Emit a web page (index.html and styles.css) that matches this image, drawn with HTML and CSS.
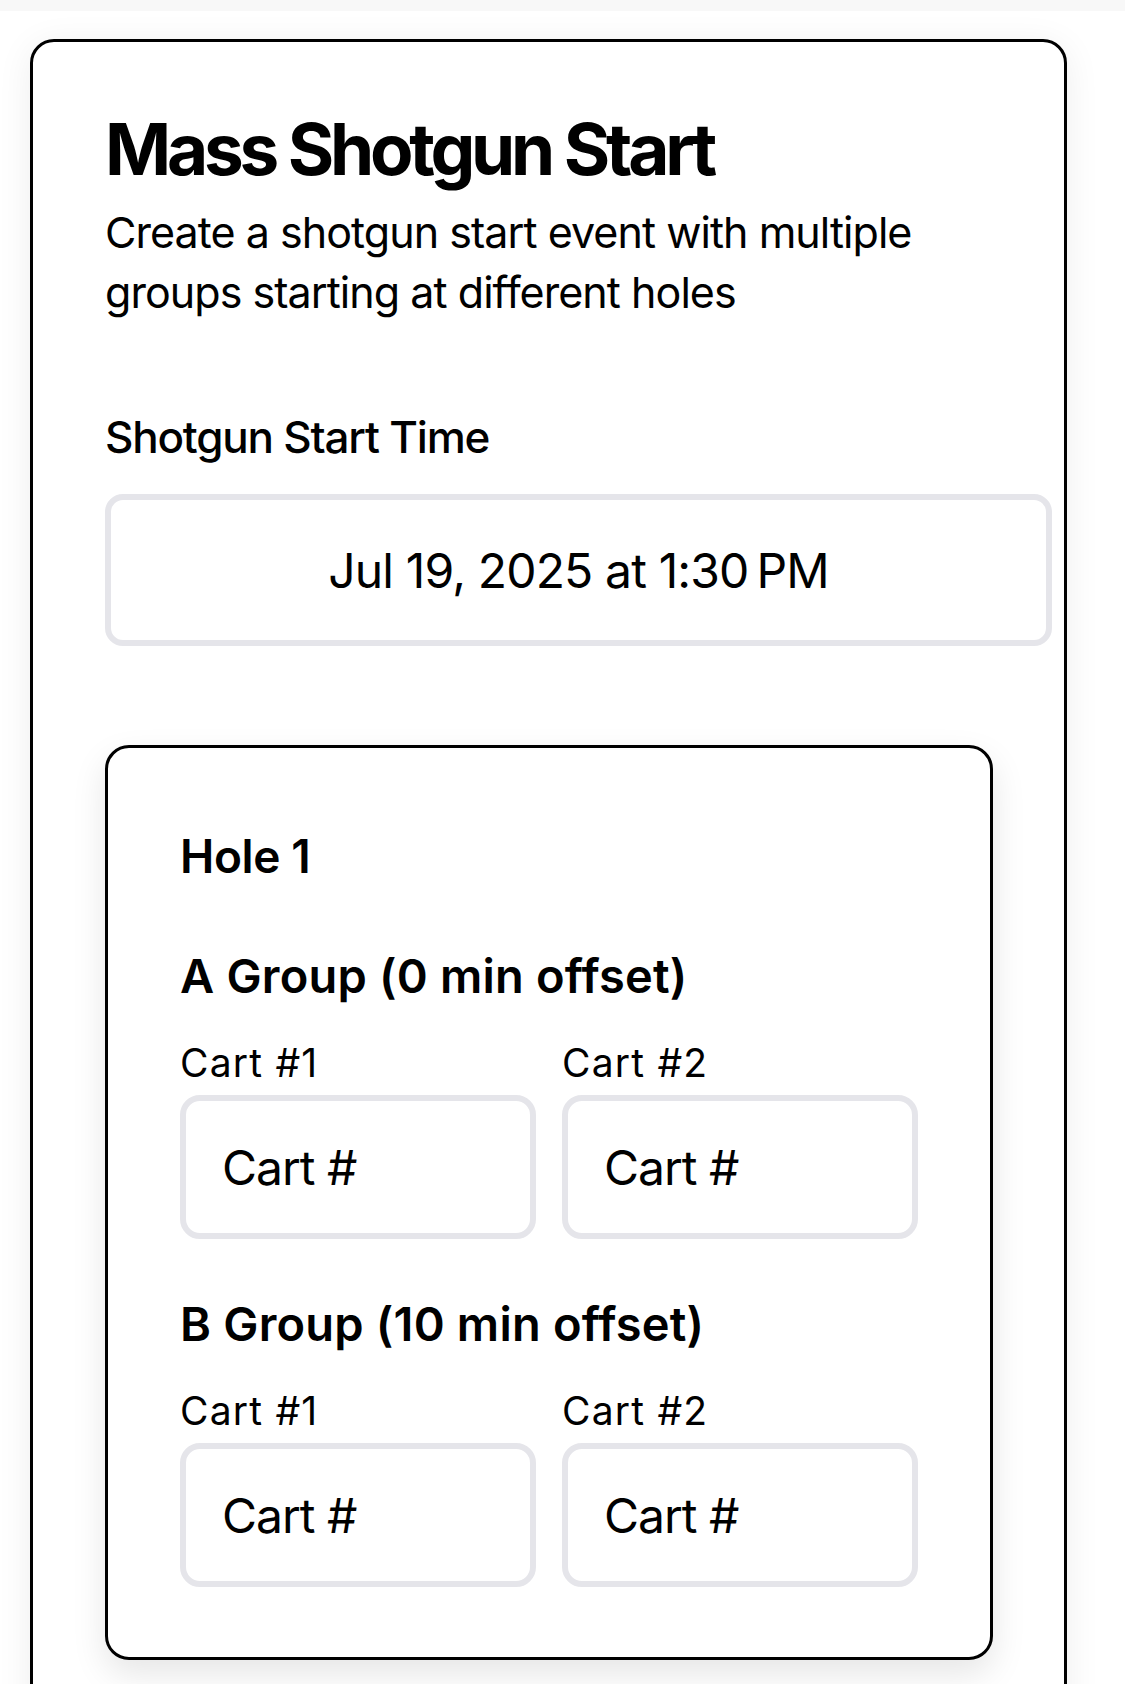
FILE: index.html
```html
<!DOCTYPE html>
<html lang="en">
<head>
<meta charset="utf-8">
<title>Mass Shotgun Start</title>
<link rel="stylesheet" href="styles.css">
</head>
<body>
<div class="topstrip"></div>
<main class="card">
  <h1 class="title">Mass Shotgun Start</h1>
  <p class="subtitle">Create a shotgun start event with multiple groups starting at different holes</p>

  <label class="field-label">Shotgun Start Time</label>
  <div class="time-input">Jul 19, 2025 at 1:30&#8239;PM</div>

  <section class="hole-card">
    <h2 class="hole-title">Hole 1</h2>

    <div class="group">
      <h3 class="group-title">A Group (0 min offset)</h3>
      <div class="cart-grid">
        <div class="cart-field">
          <label class="cart-label">Cart #1</label>
          <div class="cart-input">Cart #</div>
        </div>
        <div class="cart-field">
          <label class="cart-label">Cart #2</label>
          <div class="cart-input">Cart #</div>
        </div>
      </div>
    </div>

    <div class="group">
      <h3 class="group-title">B Group (10 min offset)</h3>
      <div class="cart-grid">
        <div class="cart-field">
          <label class="cart-label">Cart #1</label>
          <div class="cart-input">Cart #</div>
        </div>
        <div class="cart-field">
          <label class="cart-label">Cart #2</label>
          <div class="cart-input">Cart #</div>
        </div>
      </div>
    </div>
  </section>
</main>
</body>
</html>
```

FILE: styles.css
```css
* { box-sizing: border-box; }

html, body {
  margin: 0;
  padding: 0;
  background: #ffffff;
  color: #000000;
  font-family: Inter, "Noto Sans", "Liberation Sans", sans-serif;
  overflow: hidden;
}

.topstrip {
  height: 11px;
  background: #f8f8f8;
}

.card {
  display: block;
  margin: 28px 0 0 30px;
  width: 1037px;
  border: 3px solid #000;
  border-radius: 24px;
  padding: 71px 72px 72px 72px;
  background: #fff;
  box-shadow: 0 6px 36px rgba(0, 0, 0, 0.07);
}

.title {
  margin: 0;
  font-size: 71px;
  line-height: 72px;
  font-weight: 700;
  letter-spacing: -4.2px;
}

.subtitle {
  margin: 17px 0 0 0;
  font-size: 43px;
  line-height: 60px;
  font-weight: 400;
  letter-spacing: -0.95px;
}

.field-label {
  display: block;
  margin-top: 85px;
  font-size: 44px;
  line-height: 60px;
  font-weight: 500;
  letter-spacing: -1.2px;
}

.time-input {
  margin-top: 27px;
  width: 947px;
  height: 152px;
  border: 6px solid #e5e5ea;
  border-radius: 18px;
  display: flex;
  align-items: center;
  justify-content: center;
  font-size: 48px;
  font-weight: 400;
  letter-spacing: -0.85px;
}

.hole-card {
  margin-top: 99px;
  width: 888px;
  border: 3px solid #000;
  border-radius: 24px;
  padding: 72px 72px 70px 72px;
  background: #fff;
  box-shadow: 0 14px 34px rgba(0, 0, 0, 0.1);
}

.hole-title {
  margin: 0;
  font-size: 46px;
  line-height: 72px;
  font-weight: 600;
  letter-spacing: -0.4px;
}

.group {
  margin-top: 48px;
}

.group + .group {
  margin-top: 49px;
}

.group-title {
  margin: 0;
  font-size: 47px;
  line-height: 72px;
  font-weight: 600;
  letter-spacing: 0.2px;
}

.cart-grid {
  margin-top: 24px;
  display: grid;
  grid-template-columns: 1fr 1fr;
  column-gap: 26px;
}

.cart-field {
  display: flex;
  flex-direction: column;
  gap: 5px;
}

.cart-label {
  display: block;
  font-size: 39px;
  line-height: 54px;
  font-weight: 400;
  letter-spacing: 1.2px;
}

.cart-input {
  height: 144px;
  border: 6px solid #e5e5ea;
  border-radius: 20px;
  padding: 0 36px;
  display: flex;
  align-items: center;
  font-size: 48px;
  font-weight: 400;
  letter-spacing: -1px;
}
```
